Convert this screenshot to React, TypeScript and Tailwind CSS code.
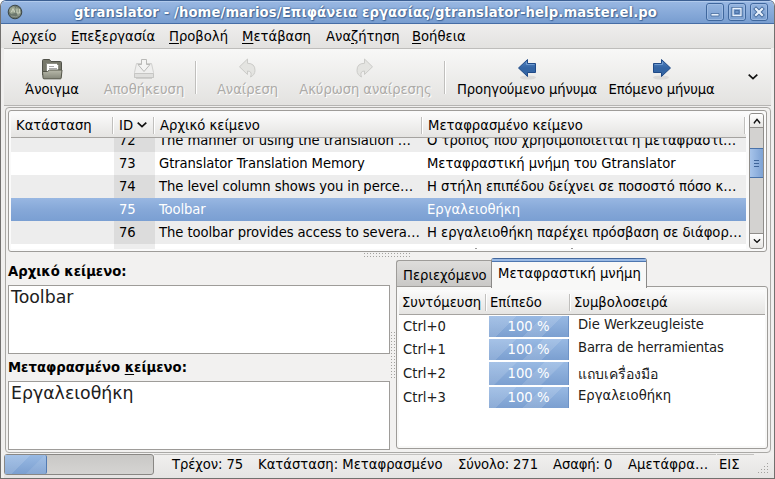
import React from "react";

const menus: [string, string, string, string][] = [
  ["", "Α", "ρχείο", "w-[59px]"],
  ["", "Ε", "πεξεργασία", "w-[98px]"],
  ["", "Π", "ροβολή", "w-[73px]"],
  ["", "Μ", "ετάβαση", "w-[84px]"],
  ["Ανα", "ζ", "ήτηση", "w-[86px]"],
  ["", "Β", "οήθεια", "w-[60px]"],
];

const messages = [
  { id: "72", src: "The manner of using the translation …", dst: "Ο τρόπος που χρησιμοποιείται η μεταφραστι…", row: "bg-[#ededed]", cell: "bg-[#dcdcdc]" },
  { id: "73", src: "Gtranslator Translation Memory", dst: "Μεταφραστική μνήμη του Gtranslator", row: "bg-white", cell: "bg-[#ededed]" },
  { id: "74", src: "The level column shows you in perce…", dst: "Η στήλη επιπέδου δείχνει σε ποσοστό πόσο κ…", row: "bg-[#ededed]", cell: "bg-[#dcdcdc]" },
  { id: "75", src: "Toolbar", dst: "Εργαλειοθήκη", row: "bg-linear-to-b from-[#98b7e2] via-[#86a8d8] to-[#7a9fd2] text-white", cell: "" },
  { id: "76", src: "The toolbar provides access to severa…", dst: "Η εργαλειοθήκη παρέχει πρόσβαση σε διάφορ…", row: "bg-[#ededed]", cell: "bg-[#dcdcdc]" },
];

const memory = [
  { key: "Ctrl+0", text: "Die Werkzeugleiste", h: "h-[23px]", keyBox: "leading-[20px]", bar: "h-[21px] leading-[19px]", up: "-mt-[3px] tracking-[-0.050px]" },
  { key: "Ctrl+1", text: "Barra de herramientas", h: "h-[23px]", keyBox: "leading-[20px]", bar: "h-[21px] leading-[19px]", up: "-mt-[3px] tracking-[-0.150px]" },
  { key: "Ctrl+2", text: "แถบเครื่องมือ", h: "h-[25px]", keyBox: "leading-[22px]", bar: "h-[23px] leading-[21px]", up: "mt-[1px] text-[14px] tracking-[-0.050px]" },
  { key: "Ctrl+3", text: "Εργαλειοθήκη", h: "h-[23px]", keyBox: "leading-[20px]", bar: "h-[21px] leading-[19px]", up: "-mt-[3px]" },
];

function Sep({ className = "" }: { className?: string }) {
  return <div className={"w-[2px] shrink-0 border-l border-[#c0bfbd] bg-white " + className} />;
}

function FolderIcon() {
  return (
    <svg width="22" height="22" viewBox="0 0 22 22">
      <path d="M1.500 17V2.500q0-1 1-1h6l1.500 2h9.500q1 0 1 1V12" fill="#77786b" stroke="#50514a" />
      <path d="M5.500 17V5.500h10l2 2V17z" fill="#fff" stroke="#8c8d83" />
      <path d="M8 8.500h5M8 10.500h8" stroke="#aaa" />
      <path d="M1.500 13.500h5l2-1.500h12.500l-.8 8q0 .8-.8.8H3q-1 0-1-1z" fill="url(#fold)" stroke="#535448" />
      <defs>
        <linearGradient id="fold" x1="0" y1="0" x2="0" y2="1">
          <stop stopColor="#b9baab" />
          <stop offset="1" stopColor="#85877a" />
        </linearGradient>
      </defs>
    </svg>
  );
}

function SaveIcon() {
  return (
    <svg width="22" height="22" viewBox="0 0 22 22">
      <path d="M3.500 5.500h15l2 9v5h-19v-5z" fill="#efefee" stroke="#d0d0ce" />
      <path d="M1.500 15.500h19v4h-19z" fill="#dfdfdd" stroke="#c6c6c4" />
      <path d="M8.500 1.500h5v5h3.500l-6 7-6-7h3.500z" fill="#f4f4f3" stroke="#b9b9b7" />
      <path d="M3 20.500h16" stroke="#cfcfcd" />
    </svg>
  );
}

function CurveArrow({ flip = false }: { flip?: boolean }) {
  return (
    <svg width="20" height="21" viewBox="0 0 20 21" className={flip ? "-scale-x-100" : ""}>
      <path d="M9.500 1v4.300q7.500 0 7.500 7 0 4.500-4.500 6.700 1-2.500.5-4-.5-2-3.500-2v3.500L1.500 8.800z" fill="#e4e4e1" stroke="#cbcbc8" strokeLinejoin="round" />
    </svg>
  );
}

function BlueArrow({ right = false }: { right?: boolean }) {
  return (
    <svg width="20" height="22" viewBox="0 0 20 22" className={right ? "-scale-x-100" : ""}>
      <ellipse cx="11" cy="19.500" rx="8" ry="2" fill="#dcdbda" />
      <path d="M10.500 1.500v4h8v9h-8v4L1.500 10z" fill="url(#blue)" stroke="#204a87" strokeLinejoin="round" />
      <path d="M9.500 4v2.500h8" stroke="#6f9bd0" fill="none" />
      <defs>
        <linearGradient id="blue" x1="0" y1="0" x2="0" y2="1">
          <stop stopColor="#5586c4" />
          <stop offset=".5" stopColor="#3465a4" />
          <stop offset="1" stopColor="#3465a4" />
        </linearGradient>
      </defs>
    </svg>
  );
}

function Chevron({ up = false, className = "" }: { up?: boolean; className?: string }) {
  return (
    <svg width="10" height="6" viewBox="0 0 10 6" className={"shrink-0 " + className + (up ? " -scale-y-100" : "")}>
      <path d="M.7.700L5 4.700 9.300.700" fill="none" stroke="#111" strokeWidth="1.700" />
    </svg>
  );
}

function AppIcon() {
  return (
    <svg width="16" height="16" viewBox="0 0 16 16" className="mt-[2px] shrink-0">
      <circle cx="8" cy="8" r="6.800" fill="#6c776d" stroke="#3c4646" />
      <path d="M3 4l4-2 2 3-1 4-4 1-2-3zM9 3l4 2 1 4-3 3-2-4z" fill="#96a18d" />
      <path d="M4 8.500l2-4 2 4M5 7h2.500M10 5v4h2.500V5" fill="none" stroke="#d0d6c4" strokeWidth=".8" />
      <path d="M4 12q5 2 9-1" fill="none" stroke="#8f968a" />
    </svg>
  );
}

function WindowButton({ children }: { children: React.ReactNode }) {
  return (
    <svg width="18" height="18" viewBox="0 0 18 18">
      <rect x=".5" y=".5" width="17" height="17" rx="2.500" fill="url(#btn)" stroke="#3f679d" />
      <rect x="1.500" y="1.500" width="15" height="15" rx="1.500" fill="none" stroke="#a5c1e6" strokeOpacity=".7" />
      {children}
      <defs>
        <linearGradient id="btn" x1="0" y1="0" x2="0" y2="1">
          <stop stopColor="#94b4df" />
          <stop offset="1" stopColor="#7a9fd0" />
        </linearGradient>
      </defs>
    </svg>
  );
}

function Dots({ w, h, className = "" }: { w: number; h: number; className?: string }) {
  const dots = [];
  for (let y = 0; y < h; y += 3) for (let x = 0; x < w; x += 3) dots.push(<rect key={x + "-" + y} x={x} y={y} width="1" height="1" />);
  return <svg width={w} height={h} fill="#a3a29f" className={className}>{dots}</svg>;
}

function Bar({ className }: { className: string }) {
  return (
    <div className={"w-[80px] shrink-0 border-r border-[#6d92c6] bg-[linear-gradient(135deg,#ffffff22_27%,#ffffff00_28%,#ffffff00_54%,#ffffff22_55%,#ffffff22_73%,#ffffff00_74%),linear-gradient(180deg,#98b9e3,#7b9fd0)] text-center text-white " + className}>
      100 %
    </div>
  );
}

const tool = "flex shrink-0 flex-col items-center pt-[9px] leading-[18px] whitespace-nowrap";
const faded = " text-[#adaba8] [text-shadow:1px_1px_0_#fff]";

export default function App() {
  return (
    <div className="h-[479px] w-[775px] bg-white">
      <div className="flex h-[479px] w-[775px] flex-col overflow-hidden rounded-t-[6px] border border-t-[#3c5f92] border-r-[#72706e] border-b-[#72706e] border-l-[#72706e] bg-[#f0efee] font-['DejaVu_Sans_Condensed','DejaVu_Sans','Noto_Sans',sans-serif] text-[14.670px] font-stretch-condensed text-black">
        <header className="flex h-[23px] shrink-0 border-t border-b border-t-[#b1caec] border-b-[#466da5] bg-linear-to-b from-[#98b7e2] to-[#789dd0] pl-[6px]">
          <AppIcon />
          <div className="ml-[51px] w-[632px] leading-[20px] font-bold tracking-[0.120px] whitespace-nowrap text-white [text-shadow:0_0_2px_#315887,1px_1px_1px_#45699b]">
            gtranslator - /home/marios/Επιφάνεια εργασίας/gtranslator-help.master.el.po
          </div>
          <div className="mt-px flex gap-[4px]">
            <WindowButton><path d="M5 10.500h8v2.500H5z" fill="#e9f2fc" stroke="#446a9c" strokeWidth=".8" /></WindowButton>
            <WindowButton><path d="M5 5.500h8v7H5z" fill="none" stroke="#446a9c" strokeWidth="3.200" /><path d="M5 5.500h8v7H5z" fill="#6d93c7" stroke="#e9f2fc" strokeWidth="1.300" /><path d="M7 7.500h4v3H7z" fill="none" stroke="#446a9c" strokeWidth=".8" /></WindowButton>
            <WindowButton><path d="M6 6l6 6m0-6l-6 6" stroke="#446a9c" strokeWidth="4" strokeLinecap="square" /><path d="M6 6l6 6m0-6l-6 6" stroke="#e9f2fc" strokeWidth="2.200" strokeLinecap="square" /></WindowButton>
          </div>
        </header>

        <nav className="flex h-[24px] shrink-0 bg-linear-to-b from-[#efeeed] to-[#e3e2e0] pl-[11px] leading-[24px]">
          {menus.map(([a, b, c, w]) => (
            <span key={a + b} className={"shrink-0 whitespace-nowrap " + w}>
              {a}<u className="underline-offset-[2px]">{b}</u>{c}
            </span>
          ))}
        </nav>

        <div className="mr-[3px] ml-[3px] flex h-[58px] shrink-0 border-t border-b border-t-[#bebdbb] border-b-[#b5b4b2] bg-linear-to-b from-[#f8f8f7] to-[#e3e2e0]">
          <div className={tool + " ml-[8px] w-[80px]"}><FolderIcon />Άνοιγμα</div>
          <div className={tool + " w-[104px]" + faded}><SaveIcon />Αποθήκευση</div>
          <Sep className="-ml-[1px] mt-[12px] h-[33px]" />
          <div className={tool + " w-[101px] tracking-[-0.080px]" + faded}><div className="h-[22px]"><CurveArrow /></div>Αναίρεση</div>
          <div className={tool + " w-[135px] tracking-[-0.080px]" + faded}><div className="-ml-[4px] h-[22px]"><CurveArrow flip /></div>Ακύρωση αναίρεσης</div>
          <Sep className="ml-[11px] mt-[12px] h-[33px]" />
          <div className={tool + " ml-[11px] w-[140px] tracking-[-0.120px]"}><BlueArrow />Προηγούμενο μήνυμα</div>
          <div className={tool + " ml-[11px] w-[107px] tracking-[-0.160px]"}><BlueArrow right />Επόμενο μήνυμα</div>
          <Chevron className="mt-[25px] ml-[33px]" />
        </div>

        <main className="mt-px ml-[4px] flex h-[346px] w-[766px] shrink-0 flex-col rounded-[4px] border border-[#aaa9a6] bg-[#f2f1f0] px-[2px] pt-[2px]">
          <section className="flex h-[142px] w-[759px] shrink-0 rounded-[3px] border border-[#9e9c99] bg-[#fafafa] pt-[2px] pl-[2px]">
            <div className="h-[136px] w-[735px] overflow-hidden">
              <div className="flex h-[25px] border-b border-[#a5a3a0] bg-linear-to-b from-[#fbfbfb] to-[#e5e4e2] leading-[23px] whitespace-nowrap">
                <span className="w-[101px] shrink-0 pl-[5px]">Κατάσταση</span>
                <Sep className="mt-[4px] h-[17px]" />
                <span className="flex w-[39px] shrink-0 pl-[5px]">ID<Chevron className="mt-[9px] ml-[4px]" /></span>
                <Sep className="mt-[4px] h-[17px]" />
                <span className="w-[266px] shrink-0 pl-[5px]">Αρχικό κείμενο</span>
                <Sep className="mt-[4px] h-[17px]" />
                <span className="w-[321px] shrink-0 pl-[5px]">Μεταφρασμένο κείμενο</span>
                <Sep className="mt-[4px] h-[17px]" />
              </div>
              <div className="h-[111px] overflow-hidden">
                <div className="-mt-[9px]">
                  {messages.map((m) => (
                    <div key={m.id} className={"flex h-[23px] leading-[21px] whitespace-nowrap " + m.row}>
                      <span className="w-[103px] shrink-0" />
                      <span className={"w-[41px] shrink-0 pl-[5px] tracking-[-0.200px] " + m.cell}>{m.id}</span>
                      <span className="w-[268px] shrink-0 pl-[4px] tracking-[-0.080px]">{m.src}</span>
                      <span className="pl-[4px] tracking-[-0.020px]">{m.dst}</span>
                    </div>
                  ))}
                  <div className="flex h-[5px] bg-white">
                    <span className="ml-[103px] w-[41px] bg-[#ededed]" />
                    <span className="mt-[4px] ml-[320px] h-px w-[2px] bg-[#999]" />
                    <span className="mt-[4px] ml-[94px] h-px w-[2px] bg-[#999]" />
                  </div>
                </div>
              </div>
            </div>
            <div className="ml-[3px] flex h-[136px] w-[15px] flex-col overflow-hidden rounded-[3px] border border-[#8f8d8a] bg-[#d3d2d0]">
              <div className="flex h-[14px] items-center justify-center border-b border-[#8f8d8a] bg-linear-to-b from-white to-[#e6e5e3]"><Chevron up className="scale-75" /></div>
              <div className="mt-[20px] flex h-[30px] flex-col items-center justify-center gap-[2px] border-y border-[#4a73aa] bg-linear-to-r from-[#a7c4ea] to-[#7da2d4]">
                <i className="h-px w-[5px] bg-[#3e659a]" /><i className="h-px w-[5px] bg-[#3e659a]" /><i className="h-px w-[5px] bg-[#3e659a]" />
              </div>
              <div className="mt-auto flex h-[15px] items-center justify-center border-t border-[#8f8d8a] bg-linear-to-b from-white to-[#e6e5e3]"><Chevron className="scale-75" /></div>
            </div>
          </section>

          <Dots w={47} h={4} className="mt-[1px] ml-[356px] shrink-0" />

          <div className="flex h-[193px]">
            <section className="w-[382px] shrink-0">
              <div className="mt-[4px] h-[24px] leading-[20px] font-bold">Αρχικό κείμενο:</div>
              <div className="h-[69px] border border-[#9e9c99] bg-white pl-[2px] font-['DejaVu_Sans'] text-[17.330px] leading-[22px] font-stretch-normal text-[#202020]">Toolbar</div>
              <div className="h-[27px] leading-[26px] font-bold">Μεταφρασμένο <u className="underline-offset-[2px]">κ</u>είμενο:</div>
              <div className="h-[69px] border border-[#9e9c99] bg-white pl-[2px] font-['DejaVu_Sans'] text-[17.330px] leading-[22px] font-stretch-normal text-[#202020]">Εργαλειοθήκη</div>
            </section>
            <Dots w={4} h={47} className="mt-[75px] ml-px shrink-0" />
            <section className="ml-px w-[372px] shrink-0">
              <div className="flex h-[30px] items-end whitespace-nowrap">
                <div className="h-[27px] w-[95px] rounded-tl-[3px] border border-r-0 border-[#9e9c99] bg-linear-to-b from-[#dedddb] to-[#c9c8c6] pl-[6px] leading-[28px]">Περιεχόμενο</div>
                <div className="relative z-10 -mb-px h-[30px] w-[156px] rounded-t-[3px] border border-b-0 border-[#8a8987] border-t-[#42669c] bg-[#f8f8f7]">
                  <div className="h-[3px] border-b border-[#4e77b0] bg-[#98b9e5]" />
                  <div className="pl-[6px] leading-[22px]">Μεταφραστική μνήμη</div>
                </div>
              </div>
              <div className="-mt-px h-[163px] rounded-b-[3px] rounded-tr-[3px] border border-[#9e9c99] bg-[#f8f8f7] px-[2px] pt-[3px] pb-[2px]">
                <div className="flex h-[25px] border-b border-[#a5a3a0] bg-linear-to-b from-[#fbfbfb] to-[#e5e4e2] leading-[23px] whitespace-nowrap">
                  <span className="w-[86px] pl-[3px]">Συντόμευση</span>
                  <Sep className="mt-[4px] h-[17px]" />
                  <span className="w-[82px] pl-[3px]">Επίπεδο</span>
                  <Sep className="mt-[4px] h-[17px]" />
                  <span className="pl-[3px]">Συμβολοσειρά</span>
                </div>
                <div className="h-[131px] bg-white pt-px">
                  {memory.map((m) => (
                    <div key={m.key} className={"flex items-start whitespace-nowrap text-[#202020] " + m.h}>
                      <span className={"w-[90px] pl-[4px] " + m.keyBox}>{m.key}</span>
                      <Bar className={m.bar} />
                      <span className={"pl-[9px] leading-[22px] " + m.up}>{m.text}</span>
                    </div>
                  ))}
                </div>
              </div>
            </section>
          </div>
        </main>

        <footer className="ml-[3px] flex h-[25px] shrink-0 bg-linear-to-b from-[#f1f0ef] to-[#e5e4e3] whitespace-nowrap">
          <div className="mt-px h-[21px] w-[150px] shrink-0 rounded-[3px] border border-[#898784] bg-linear-to-b from-[#c9c8c6] to-[#d5d4d2]">
            <div className="h-full w-[42px] rounded-r-[2px] border-r border-[#527bb3] bg-[linear-gradient(135deg,#ffffff22_42%,#ffffff00_43%,#ffffff00_66%,#ffffff18_67%),linear-gradient(180deg,#98b9e3,#7b9fd0)]" />
          </div>
          <div className="mt-px flex h-[22px] w-[562px] shrink-0 border-t border-[#c3c2c0] leading-[17px]">
            <span className="ml-[18px] w-[86px] tracking-[-0.100px]">Τρέχον: 75</span>
            <span className="w-[200px]">Κατάσταση: Μεταφρασμένο</span>
            <span className="w-[95px] tracking-[-0.100px]">Σύνολο: 271</span>
            <span className="w-[75px] tracking-[-0.100px]">Ασαφή: 0</span>
            <span>Αμετάφρα…</span>
          </div>
          <div className="mt-px ml-px h-[22px] w-[37px] border-t border-[#c3c2c0] pl-[2px] leading-[17px]">ΕΙΣ</div>
          <svg width="12" height="12" className="mt-[10px] ml-[3px]" fill="#a3a29f">
            {[0, 1, 2, 3].map((r) => Array.from({ length: r + 1 }, (_, i) => <rect key={r + "-" + i} x={10 - i * 3} y={r * 3} width="1" height="1" />))}
          </svg>
        </footer>
      </div>
    </div>
  );
}
